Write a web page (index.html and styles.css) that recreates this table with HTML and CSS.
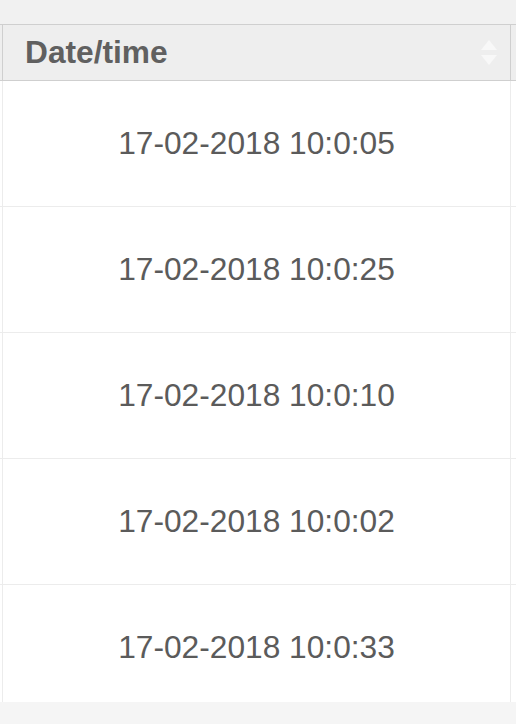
FILE: index.html
```html
<!DOCTYPE html>
<html lang="en">
<head>
  <meta charset="UTF-8" />
  <title>Date/time</title>
  <link rel="stylesheet" href="styles.css">
</head>
<body>
  <div class="toolbar"></div>

  <div class="table-scroll">
    <div class="row head">
      <div class="cell">
        <span class="title">Date/time</span>
        <svg class="sort" width="16" height="26" viewBox="0 0 16 26">
          <polygon points="8,0 16,10 0,10" />
          <polygon points="0,15 16,15 8,25" />
        </svg>
      </div>
    </div>
    <div class="row"><div class="cell">17-02-2018 10:0:05</div></div>
    <div class="row"><div class="cell">17-02-2018 10:0:25</div></div>
    <div class="row"><div class="cell">17-02-2018 10:0:10</div></div>
    <div class="row"><div class="cell">17-02-2018 10:0:02</div></div>
    <div class="row"><div class="cell">17-02-2018 10:0:33</div></div>
  </div>

  <div class="footer"></div>
</body>
</html>
```

FILE: styles.css
```css
body {
  margin: 0;
  padding: 0;
  font-family: "Liberation Sans", Arial, sans-serif;
  background: #fff;
  color: #5b5b5b;
}

.toolbar {
  height: 24px;
  background: #f1f1f1;
}

.table-scroll {
  height: 678px;
  overflow: hidden;
  background: #fff;
}

.row {
  border-bottom: 1px solid #ececec;
}

.cell {
  box-sizing: border-box;
  width: 509px;
  height: 125px;
  margin-left: 2px;
  border-left: 1px solid #ececec;
  border-right: 1px solid #ececec;
  display: flex;
  align-items: center;
  justify-content: center;
  font-size: 31.7px;
}

/* header row */
.head {
  background: #eeeeee;
  border-top: 1px solid #cfcfcf;
  border-bottom: 1px solid #cfcfcf;
}

.head .cell {
  height: 55px;
  justify-content: space-between;
  padding: 0 13px 0 22px;
  border-left-color: #cfcfcf;
  border-right-color: #cfcfcf;
}

.title {
  font-weight: bold;
  color: #606060;
}

.sort {
  fill: #f8f8f8;
}

.footer {
  height: 22px;
  background: #f5f5f5;
}
```
